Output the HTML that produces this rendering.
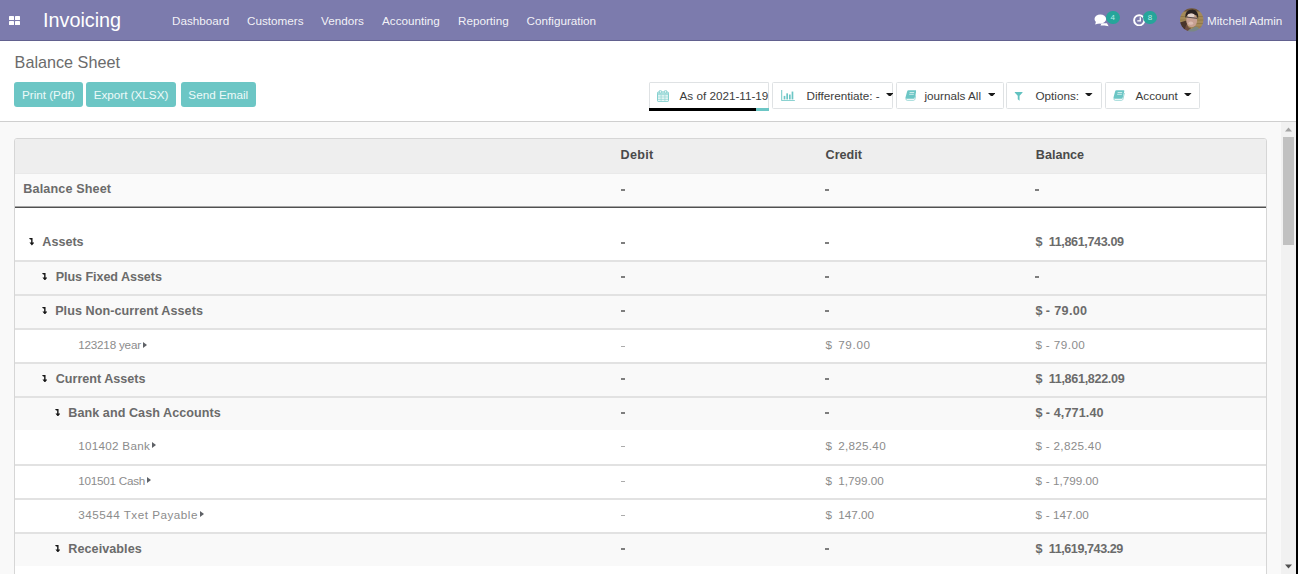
<!DOCTYPE html>
<html lang="en">
<head>
<meta charset="utf-8">
<title>Balance Sheet</title>
<style>
*{box-sizing:border-box;margin:0;padding:0}
html,body{width:1298px;height:574px;overflow:hidden;background:#fff;font-family:"Liberation Sans",sans-serif;}
body{position:relative}
.abs{position:absolute;white-space:nowrap}
/* navbar */
#nav{position:absolute;left:0;top:0;width:1296px;height:41px;background:#7c7bad;border-bottom:1px solid #62618f}
#nav .t{position:absolute;color:#fff;white-space:nowrap;line-height:1}
#nav .menu{font-size:11.7px;top:14.7px;color:rgba(255,255,255,.92)}
#brand{font-size:19.8px;left:43px;top:11px}
.badge{position:absolute;background:#26a59a;color:#b8efe8;border-radius:7px;font-size:8px;line-height:13.6px;height:13px;text-align:center;font-weight:400}
/* control panel */
#cp{position:absolute;left:0;top:41px;width:1296px;height:81px;background:#fff;border-bottom:1px solid #cfcfcf}
#title{position:absolute;left:14.6px;top:53.5px;font-size:16.2px;color:#6b6b6b;line-height:1;white-space:nowrap}
.btn{position:absolute;top:82px;height:24.5px;background:#6cc6c5;border-radius:3px;color:#ecfaf9;font-size:11.7px;line-height:26.2px;text-align:center;white-space:nowrap}
.fb{position:absolute;top:82px;height:26.5px;border:1px solid #dfe2e4;border-radius:1.5px;background:#fff}
.ft{position:absolute;top:89.5px;font-size:11.7px;color:#3c3c3c;line-height:1;white-space:nowrap}
.caret{position:absolute;width:0;height:0;border-left:3.6px solid transparent;border-right:3.6px solid transparent;border-top:3.7px solid #1c1c1c;top:92.6px}
/* content */
#content{position:absolute;left:0;top:122px;width:1281px;height:452px;background:#f9f9f9;overflow:hidden}
#card{position:absolute;left:14px;top:16px;width:1253px;height:460px;background:#fff;border:1px solid #d6d6d6;border-radius:3px 3px 0 0}
.row{position:absolute;left:0;width:1251px;height:34px;border-top:2px solid #e2e2e2}
.row.g{background:#f9f9f9}
.c{position:absolute;white-space:nowrap;line-height:1;font-size:12.6px;color:#6a6a6a}
.b{font-weight:700;color:#6b6b6b}
.hd{color:#4a4a4a}
.n{color:#8c8c8c}
.d{position:absolute;display:block}
.db{width:4px;height:2px;background:#7e7e7e}
.dn{width:4px;height:1px;background:#ababab}
.tri{position:absolute;width:0;height:0;border-top:3.6px solid transparent;border-bottom:3.6px solid transparent;border-left:4.8px solid #5e6166}
/* scrollbar */
#sb{position:absolute;left:1281px;top:122px;width:15px;height:452px;background:#f1f1f1}
#thumb{position:absolute;left:2px;top:15px;width:11px;height:108px;background:#c1c1c1}
#black{position:absolute;left:1296px;top:0;width:2px;height:574px;background:#000}
</style>
</head>
<body>
<div id="nav">
  <svg class="abs" style="left:9px;top:16px" width="11" height="9" viewBox="0 0 11 9"><rect x="0" y="0" width="5" height="4" rx=".6" fill="#fff"/><rect x="6" y="0" width="5" height="4" rx=".6" fill="#fff"/><rect x="0" y="5" width="5" height="4" rx=".6" fill="#fff"/><rect x="6" y="5" width="5" height="4" rx=".6" fill="#fff"/></svg>
  <span id="brand" class="t">Invoicing</span>
  <span class="t menu" style="left:172px">Dashboard</span>
  <span class="t menu" style="left:247px">Customers</span>
  <span class="t menu" style="left:321px">Vendors</span>
  <span class="t menu" style="left:382px">Accounting</span>
  <span class="t menu" style="left:458px">Reporting</span>
  <span class="t menu" style="left:526.6px">Configuration</span>
  <!-- chat icon -->
  <svg class="abs" style="left:1094px;top:14px" width="15" height="13" viewBox="0 0 15 13"><path d="M7.5 9.2 H13 L14.6 12.3 L10.5 11.6 H6.5Z" fill="#fff"/><ellipse cx="6.3" cy="5.1" rx="5.8" ry="4.6" fill="#fff"/><path d="M2 7.5 L1.2 10.6 L5.5 9.3 Z" fill="#fff"/></svg>
  <span class="badge" style="left:1105.6px;top:11px;width:14.4px">4</span>
  <!-- clock icon -->
  <svg class="abs" style="left:1132.8px;top:13.6px" width="12.6" height="12.6" viewBox="0 0 12.6 12.6"><circle cx="6.2" cy="6.3" r="5.1" fill="none" stroke="#fff" stroke-width="1.9"/><path d="M7.3 3.2 V6.9 H4.3" fill="none" stroke="#fff" stroke-width="1.3"/></svg>
  <span class="badge" style="left:1143.2px;top:11px;width:13.4px">8</span>
  <!-- avatar -->
  <svg class="abs" style="left:1180px;top:8px" width="24" height="24" viewBox="0 0 24 24">
    <defs><clipPath id="av"><circle cx="11.7" cy="11.9" r="11.7"/></clipPath><filter id="bl" x="-20%" y="-20%" width="140%" height="140%"><feGaussianBlur stdDeviation="0.7"/></filter></defs>
    <g clip-path="url(#av)"><g filter="url(#bl)">
      <rect x="-3" y="-3" width="30" height="30" fill="#a48a58"/>
      <path d="M-2 8.5H26M-2 12H26M-2 15.5H26M-2 19H26" stroke="#8d7346" stroke-width=".8"/>
      <rect x="-3" y="-3" width="30" height="6.5" fill="#705739"/>
      <path d="M-2 15 L6.5 12.5 L8.5 26 L-2 26Z" fill="#4a342c"/>
      <path d="M5.2 10 Q4.6 1.8 12.5 1.6 Q19 2.2 18.2 11 L16.4 7.2 L8 6.6 Z" fill="#2b2324"/>
      <ellipse cx="11.7" cy="12.4" rx="5.4" ry="6.8" fill="#c6a092"/>
      <ellipse cx="11" cy="7.6" rx="3.4" ry="2" fill="#e2d2cb"/>
      <ellipse cx="10.8" cy="15.2" rx="2.4" ry="1.6" fill="#dcbcb0"/>
      <path d="M6.2 9 L17.4 10.4" stroke="#54484a" stroke-width="1"/>
      <path d="M6.5 16 Q8 20 11 20.5 L9 26 L4 24Z" fill="#6d4e40"/>
      <path d="M7 26 Q8 20.5 11.5 21 L15.5 18.5 Q20.5 19.5 22 26Z" fill="#7a8784"/>
    </g></g>
  </svg>
  <span class="t menu" style="left:1207px">Mitchell Admin</span>
</div>

<div id="cp"></div>
<div id="title">Balance Sheet</div>
<div class="btn" style="left:14px;width:68.5px">Print (Pdf)</div>
<div class="btn" style="left:86px;width:90px">Export (XLSX)</div>
<div class="btn" style="left:180.5px;width:75.5px">Send Email</div>

<!-- filters -->
<div class="fb" style="left:649px;width:120px;border-bottom:none;border-radius:1.5px 1.5px 0 0;height:26px"></div>
<div class="abs" style="left:649px;top:108px;width:107px;height:3px;background:#000"></div>
<div class="abs" style="left:756px;top:108px;width:13px;height:3px;background:#6cc6c5"></div>
<div class="fb" style="left:772px;width:121px"></div>
<div class="fb" style="left:896px;width:107.5px"></div>
<div class="fb" style="left:1006px;width:95.5px"></div>
<div class="fb" style="left:1104.5px;width:95px"></div>

<span class="ft" style="left:679.5px">As of 2021-11-19</span>
<span class="ft" style="left:806.5px">Differentiate: -</span>
<span class="ft" style="left:924.5px">journals All</span>
<span class="ft" style="left:1035.5px">Options:</span>
<span class="ft" style="left:1135.5px">Account</span>
<svg class="abs" style="left:885.9px;top:92.5px" width="7.6" height="3.9" viewBox="0 0 7.6 3.9"><path d="M0 0H7.6L3.8 3.9Z" fill="#1a1a1a"/></svg>
<svg class="abs" style="left:987.8px;top:92.5px" width="7.6" height="3.9" viewBox="0 0 7.6 3.9"><path d="M0 0H7.6L3.8 3.9Z" fill="#1a1a1a"/></svg>
<svg class="abs" style="left:1085.1px;top:92.5px" width="7.6" height="3.9" viewBox="0 0 7.6 3.9"><path d="M0 0H7.6L3.8 3.9Z" fill="#1a1a1a"/></svg>
<svg class="abs" style="left:1184.1px;top:92.5px" width="7.6" height="3.9" viewBox="0 0 7.6 3.9"><path d="M0 0H7.6L3.8 3.9Z" fill="#1a1a1a"/></svg>

<!-- filter icons -->
<svg class="abs" style="left:656.5px;top:89.5px" width="12" height="12.2" viewBox="0 0 12 12.2"><rect x=".5" y="1.9" width="11" height="9.8" rx="1.2" fill="#eaf8f7" stroke="#74c9c8" stroke-width=".9"/><rect x=".9" y="2.3" width="10.2" height="2.2" fill="#a9dfde"/><path d="M.5 7h11M.5 9.4h11M4.1 4.6v7M7.9 4.6v7M.5 4.7h11" stroke="#8fd4d3" stroke-width=".7"/><rect x="2.4" y=".2" width="2" height="3" rx="1" fill="#eaf8f7" stroke="#74c9c8" stroke-width=".7"/><rect x="7.6" y=".2" width="2" height="3" rx="1" fill="#eaf8f7" stroke="#74c9c8" stroke-width=".7"/></svg>
<svg class="abs" style="left:780.5px;top:89.9px" width="14" height="11.3" viewBox="0 0 14 11.5"><path d="M.6 0V10.9H14" fill="none" stroke="#6cc6c5" stroke-width="1"/><rect x="2.6" y="6" width="1.7" height="3.6" fill="#6cc6c5"/><rect x="5.3" y="3.4" width="1.7" height="6.2" fill="#6cc6c5"/><rect x="8" y="4.6" width="1.7" height="5" fill="#6cc6c5"/><rect x="10.7" y="1.6" width="1.7" height="8" fill="#6cc6c5"/></svg>
<svg class="abs bk" style="left:904.6px;top:89.9px" width="11.8" height="11" viewBox="0 0 11.8 11"><path d="M3.6 .2H10.6Q11.6 .2 11.3 1.2L9.6 8Q9.4 8.8 8.5 8.8H1.5Q.2 8.8 .5 7.5L2.1 1.4Q2.4 .2 3.6 .2Z" fill="#6cc6c5"/><path d="M.9 8.6Q.7 10.3 2.2 10.3H8.6Q9.6 10.3 9.9 9.3L11.4 3" fill="none" stroke="#8fd4d3" stroke-width=".9"/><path d="M4.6 2.5H9.2M4.2 4.3H8.8" stroke="#e6f6f6" stroke-width=".8"/></svg>
<svg class="abs" style="left:1014px;top:91.7px" width="9.3" height="9" viewBox="0 0 9.6 11"><path d="M.2 0H9.4Q9.8 .4 9.4 .9L5.9 4.6V10.8L3.7 8.8V4.6L.2 .9Q-.2 .4 .2 0Z" fill="#62c2c0"/></svg>
<svg class="abs bk" style="left:1112.8px;top:89.9px" width="11.8" height="11" viewBox="0 0 11.8 11"><path d="M3.6 .2H10.6Q11.6 .2 11.3 1.2L9.6 8Q9.4 8.8 8.5 8.8H1.5Q.2 8.8 .5 7.5L2.1 1.4Q2.4 .2 3.6 .2Z" fill="#6cc6c5"/><path d="M.9 8.6Q.7 10.3 2.2 10.3H8.6Q9.6 10.3 9.9 9.3L11.4 3" fill="none" stroke="#8fd4d3" stroke-width=".9"/><path d="M4.6 2.5H9.2M4.2 4.3H8.8" stroke="#e6f6f6" stroke-width=".8"/></svg>

<div id="content">
 <div id="card">
<div class="abs" style="left:0;top:0;width:1251px;height:34px;background:#eeeeee;border-radius:2px 2px 0 0"></div>
<div class="abs" style="left:0;top:34px;width:1251px;height:33.5px;background:#fafafa"></div>
<div class="abs" style="left:0;top:67px;width:1251px;height:1px;background:#a6a6a6"></div>
<div class="abs" style="left:0;top:68px;width:1251px;height:1px;background:#505050"></div>
<div class="abs" style="left:0;top:34px;width:1251px;height:1px;background:#e9e9e9"></div>
<div class="row g" style="top:121px"></div>
<div class="row g" style="top:155px"></div>
<div class="row" style="top:189px"></div>
<div class="row g" style="top:223px"></div>
<div class="row g" style="top:257px"></div>
<div class="row" style="top:291px;border-top-color:transparent"></div>
<div class="row" style="top:325px"></div>
<div class="row" style="top:359px"></div>
<div class="row g" style="top:393px"></div>
<div class="row" style="top:427px;border-top-color:transparent"></div>
<span id="t0" class="c b hd" style="left:605.60px;top:10.34px;font-size:12.6px;letter-spacing:0.31px">Debit</span>
<span id="t1" class="c b hd" style="left:810.60px;top:10.34px;font-size:12.6px">Credit</span>
<span id="t2" class="c b hd" style="left:1020.80px;top:10.34px;font-size:12.6px">Balance</span>
<span id="t3" class="c b" style="left:8.30px;top:44.14px;font-size:12.6px;letter-spacing:0.13px">Balance Sheet</span>
<span id="t4" class="c b nm" style="left:27.30px;top:96.74px;font-size:12.6px">Assets</span>
<span id="t5" class="c b" style="left:1020.60px;top:96.74px;font-size:12.6px">$</span>
<span id="t6" class="c b" style="left:1033.80px;top:96.74px;font-size:12.6px;letter-spacing:-0.38px">11,861,743.09</span>
<span id="t7" class="c b nm" style="left:40.70px;top:131.54px;font-size:12.6px;letter-spacing:-0.07px">Plus Fixed Assets</span>
<span id="t8" class="c b nm" style="left:40.13px;top:165.54px;font-size:12.6px;letter-spacing:0.06px">Plus Non-current Assets</span>
<span id="t9" class="c b" style="left:1020.60px;top:165.54px;font-size:12.6px">$</span>
<span id="t10" class="c b" style="left:1030.80px;top:165.54px;font-size:12.6px;letter-spacing:0.35px">- 79.00</span>
<span id="t11" class="c n nm" style="left:63.20px;top:200.28px;font-size:11.7px;letter-spacing:-0.21px">123218 year</span>
<span id="t12" class="c n" style="left:810.60px;top:200.28px;font-size:11.7px">$</span>
<span id="t13" class="c n" style="left:823.20px;top:200.28px;font-size:11.7px;letter-spacing:0.66px">79.00</span>
<span id="t14" class="c n" style="left:1020.60px;top:200.28px;font-size:11.7px">$</span>
<span id="t15" class="c n" style="left:1030.80px;top:200.28px;font-size:11.7px;letter-spacing:0.44px">- 79.00</span>
<span id="t16" class="c b nm" style="left:40.70px;top:233.54px;font-size:12.6px">Current Assets</span>
<span id="t17" class="c b" style="left:1020.60px;top:233.54px;font-size:12.6px">$</span>
<span id="t18" class="c b" style="left:1033.80px;top:233.54px;font-size:12.6px;letter-spacing:-0.33px">11,861,822.09</span>
<span id="t19" class="c b nm" style="left:53.30px;top:267.54px;font-size:12.6px;letter-spacing:0.05px">Bank and Cash Accounts</span>
<span id="t20" class="c b" style="left:1020.60px;top:267.54px;font-size:12.6px">$</span>
<span id="t21" class="c b" style="left:1030.80px;top:267.54px;font-size:12.6px;letter-spacing:0.11px">- 4,771.40</span>
<span id="t22" class="c n nm" style="left:63.20px;top:301.08px;font-size:11.7px;letter-spacing:0.27px">101402 Bank</span>
<span id="t23" class="c n" style="left:810.60px;top:301.08px;font-size:11.7px">$</span>
<span id="t24" class="c n" style="left:823.20px;top:301.08px;font-size:11.7px;letter-spacing:0.28px">2,825.40</span>
<span id="t25" class="c n" style="left:1020.60px;top:301.08px;font-size:11.7px">$</span>
<span id="t26" class="c n" style="left:1030.80px;top:301.08px;font-size:11.7px;letter-spacing:0.30px">- 2,825.40</span>
<span id="t27" class="c n nm" style="left:63.20px;top:335.58px;font-size:11.7px;letter-spacing:-0.25px">101501 Cash</span>
<span id="t28" class="c n" style="left:810.60px;top:335.58px;font-size:11.7px">$</span>
<span id="t29" class="c n" style="left:823.20px;top:335.58px;font-size:11.7px">1,799.00</span>
<span id="t30" class="c n" style="left:1020.60px;top:335.58px;font-size:11.7px">$</span>
<span id="t31" class="c n" style="left:1030.80px;top:335.58px;font-size:11.7px">- 1,799.00</span>
<span id="t32" class="c n nm" style="left:63.20px;top:369.88px;font-size:11.7px;letter-spacing:0.50px">345544 Txet Payable</span>
<span id="t33" class="c n" style="left:810.60px;top:369.88px;font-size:11.7px">$</span>
<span id="t34" class="c n" style="left:823.20px;top:369.88px;font-size:11.7px">147.00</span>
<span id="t35" class="c n" style="left:1020.60px;top:369.88px;font-size:11.7px">$</span>
<span id="t36" class="c n" style="left:1030.80px;top:369.88px;font-size:11.7px">- 147.00</span>
<span id="t37" class="c b nm" style="left:53.30px;top:403.54px;font-size:12.6px;letter-spacing:0.06px">Receivables</span>
<span id="t38" class="c b" style="left:1020.60px;top:403.54px;font-size:12.6px">$</span>
<span id="t39" class="c b" style="left:1033.80px;top:403.54px;font-size:12.6px;letter-spacing:-0.44px">11,619,743.29</span>
<i class="d db" style="left:606px;top:50px"></i>
<i class="d db" style="left:810px;top:50px"></i>
<i class="d db" style="left:1020px;top:50px"></i>
<i class="d db" style="left:606px;top:103px"></i>
<i class="d db" style="left:810px;top:103px"></i>
<i class="d db" style="left:606px;top:137px"></i>
<i class="d db" style="left:810px;top:137px"></i>
<i class="d db" style="left:1020px;top:137px"></i>
<i class="d db" style="left:606px;top:171px"></i>
<i class="d db" style="left:810px;top:171px"></i>
<i class="d dn" style="left:606px;top:207px"></i>
<i class="d db" style="left:606px;top:239px"></i>
<i class="d db" style="left:810px;top:239px"></i>
<i class="d db" style="left:606px;top:273px"></i>
<i class="d db" style="left:810px;top:273px"></i>
<i class="d dn" style="left:606px;top:307px"></i>
<i class="d dn" style="left:606px;top:342px"></i>
<i class="d dn" style="left:606px;top:376px"></i>
<i class="d db" style="left:606px;top:409px"></i>
<i class="d db" style="left:810px;top:409px"></i>
<svg class="abs" style="left:13.8px;top:99.2px" width="5.4" height="7.5" viewBox="0 0 5.6 8"><path d="M0 0H3.7V4.9H5.6L3 8L.4 4.9H2.2V1.5H1Z" fill="#161616"/></svg>
<svg class="abs" style="left:27.1px;top:133.9px" width="5.4" height="7.5" viewBox="0 0 5.6 8"><path d="M0 0H3.7V4.9H5.6L3 8L.4 4.9H2.2V1.5H1Z" fill="#161616"/></svg>
<svg class="abs" style="left:27.1px;top:167.9px" width="5.4" height="7.5" viewBox="0 0 5.6 8"><path d="M0 0H3.7V4.9H5.6L3 8L.4 4.9H2.2V1.5H1Z" fill="#161616"/></svg>
<svg class="abs" style="left:27.1px;top:235.9px" width="5.4" height="7.5" viewBox="0 0 5.6 8"><path d="M0 0H3.7V4.9H5.6L3 8L.4 4.9H2.2V1.5H1Z" fill="#161616"/></svg>
<svg class="abs" style="left:39.8px;top:269.9px" width="5.4" height="7.5" viewBox="0 0 5.6 8"><path d="M0 0H3.7V4.9H5.6L3 8L.4 4.9H2.2V1.5H1Z" fill="#161616"/></svg>
<svg class="abs" style="left:39.8px;top:405.9px" width="5.4" height="7.5" viewBox="0 0 5.6 8"><path d="M0 0H3.7V4.9H5.6L3 8L.4 4.9H2.2V1.5H1Z" fill="#161616"/></svg>
<i class="tri" style="left:128.4px;top:202.5px"></i>
<i class="tri" style="left:137.3px;top:303.3px"></i>
<i class="tri" style="left:131.9px;top:337.8px"></i>
<i class="tri" style="left:184.7px;top:372.1px"></i>
 </div>
</div>

<div id="sb">
  <svg class="abs" style="left:4px;top:5px" width="7" height="5" viewBox="0 0 7 5"><path d="M0 4.5L3.5 .5L7 4.5Z" fill="#a3a3a3"/></svg>
  <div id="thumb"></div>
  <svg class="abs" style="left:4px;top:441.5px" width="7" height="5" viewBox="0 0 7 5"><path d="M0 .5L3.5 4.5L7 .5Z" fill="#505050"/></svg>
</div>
<div id="black"></div>
</body>
</html>
